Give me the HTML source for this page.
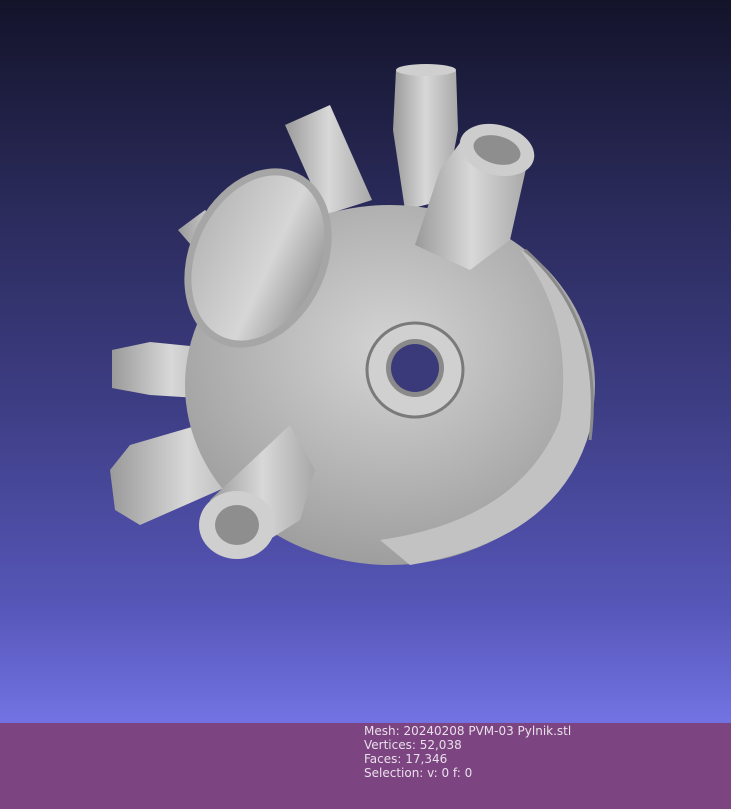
<!DOCTYPE html>
<html><head><meta charset="utf-8"><style>
html,body{margin:0;padding:0}
body{width:731px;height:808px;overflow:hidden;position:relative;
background:linear-gradient(to bottom,#13132a 0%,#2a2a5a 25%,#3d3d84 50%,#5656b8 75%,#7272e2 89%);}
#bar{position:absolute;left:0;top:722px;width:731px;height:86px;background:#7c4480;border-top:1px solid #7070e0}
#txt{position:absolute;left:364px;top:724px;font:12px/14px "DejaVu Sans","Liberation Sans",sans-serif;color:#e8e0ea}
svg{position:absolute;left:0;top:0}
</style></head><body>
<svg width="731" height="722" viewBox="0 0 731 722">
<defs>
<linearGradient id="g1" x1="0" y1="0" x2="1" y2="0"><stop offset="0" stop-color="#9a9a9a"/><stop offset=".5" stop-color="#d8d8d8"/><stop offset="1" stop-color="#a8a8a8"/></linearGradient>
<radialGradient id="rb" cx=".5" cy=".4" r=".6"><stop offset="0" stop-color="#d4d4d4"/><stop offset="1" stop-color="#9e9e9e"/></radialGradient>
<linearGradient id="gin" x1="0" y1="0" x2="1" y2="0"><stop offset="0" stop-color="#b8b8b8"/><stop offset=".6" stop-color="#d6d6d6"/><stop offset="1" stop-color="#9a9a9a"/></linearGradient>
</defs>
<path d="M396 70 L456 70 L458 130 L445 200 L405 210 L393 130Z" fill="url(#g1)"/>
<ellipse cx="426" cy="70" rx="30" ry="6" fill="#cfcfcf"/>
<path d="M285 125 L330 105 L372 200 L325 215Z" fill="url(#g1)"/>
<path d="M178 230 L205 210 L260 260 L230 290Z" fill="url(#g1)"/>
<path d="M112 350 L150 342 L230 350 L230 400 L150 395 L112 388Z" fill="url(#g1)"/>
<path d="M110 470 L130 445 L250 410 L265 470 L140 525 L115 510Z" fill="url(#g1)"/>
<ellipse cx="390" cy="385" rx="205" ry="180" fill="url(#rb)"/>
<path d="M520 250 Q600 300 590 430 Q560 540 410 565 L380 540 Q520 520 560 420 Q575 320 520 250Z" fill="#c2c2c2"/>
<path d="M525 250 Q605 320 590 440" fill="none" stroke="#8a8a8a" stroke-width="3"/>
<ellipse cx="258" cy="258" rx="65" ry="90" transform="rotate(25 258 258)" fill="url(#gin)" stroke="#a6a6a6" stroke-width="7"/>
<path d="M462 140 L528 160 L510 240 L470 270 L415 245 L440 170Z" fill="url(#g1)"/>
<ellipse cx="497" cy="150" rx="38" ry="25" transform="rotate(15 497 150)" fill="#cdcdcd"/>
<ellipse cx="497" cy="150" rx="24" ry="14" transform="rotate(15 497 150)" fill="#8e8e8e"/>
<path d="M210 500 L290 425 L315 470 L300 520 L245 555Z" fill="url(#g1)"/>
<ellipse cx="237" cy="525" rx="38" ry="34" fill="#cfcfcf"/>
<ellipse cx="237" cy="525" rx="22" ry="20" fill="#8e8e8e"/>
<ellipse cx="415" cy="370" rx="48" ry="47" fill="#d0d0d0" stroke="#7a7a7a" stroke-width="3"/>
<ellipse cx="415" cy="368" rx="29" ry="29" fill="#8a8a8a"/>
<ellipse cx="415" cy="368" rx="24" ry="24" fill="#3a3a7a"/>
</svg>
<div id="bar"></div>
<div id="txt">Mesh: 20240208 PVM-03 Pylnik.stl<br>Vertices: 52,038<br>Faces: 17,346<br>Selection: v: 0 f: 0</div>
</body></html>
